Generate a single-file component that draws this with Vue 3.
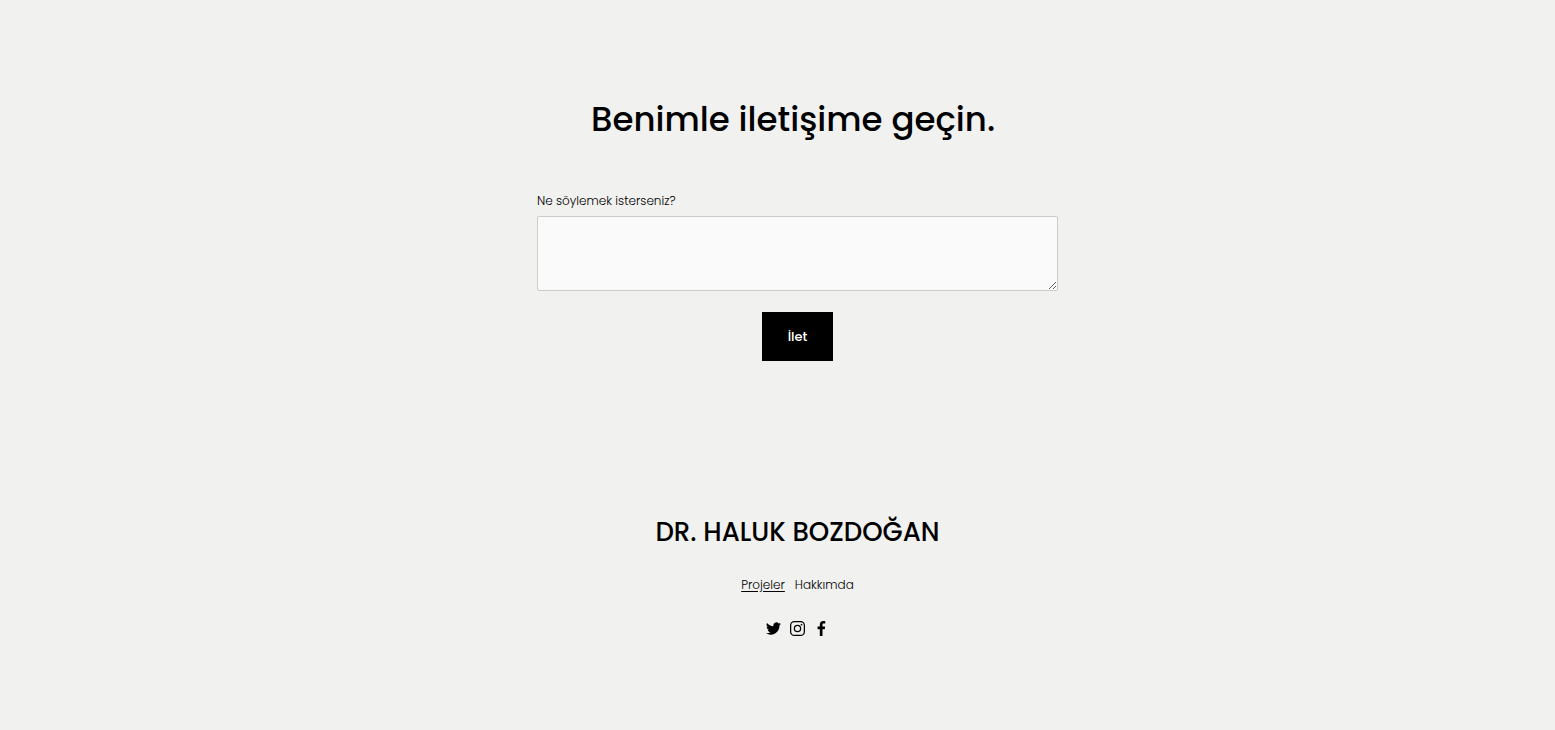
<script setup>
import { ref } from 'vue'

const message = ref('')
</script>

<template>
  <div class="page">
    <main class="contact">
      <h1>Benimle iletişime geçin.&nbsp;</h1>
      <form class="form" @submit.prevent>
        <label for="message">Ne söylemek isterseniz?</label>
        <textarea id="message" v-model="message"></textarea>
        <button type="submit">İlet</button>
      </form>
    </main>
    <footer class="footer">
      <h2>DR. HALUK BOZDOĞAN</h2>
      <nav class="links">
        <a href="#projeler" class="active">Projeler</a>
        <a href="#hakkimda">Hakkımda</a>
      </nav>
      <div class="social">
        <a href="#twitter" aria-label="Twitter">
          <svg viewBox="0 0 24 24"><path d="M24 4.600c-.9.4-1.800.7-2.800.8 1-.6 1.800-1.600 2.200-2.700-1 .6-2 1-3.100 1.200a4.920 4.920 0 0 0-8.400 4.500C7.700 8.200 4.100 6.200 1.700 3.200a4.900 4.900 0 0 0 1.500 6.600c-.8 0-1.600-.2-2.200-.6v.1c0 2.400 1.700 4.400 3.900 4.800-.7.2-1.500.2-2.200.1.600 2 2.400 3.400 4.600 3.400A9.900 9.900 0 0 1 0 19.500 14 14 0 0 0 21.500 7.100c1-.7 1.800-1.600 2.500-2.500z" /></svg>
        </a>
        <a href="#instagram" aria-label="Instagram">
          <svg viewBox="0 0 24 24"><rect x="1" y="1" width="22" height="22" rx="6" fill="none" stroke="#000" stroke-width="2" /><circle cx="12" cy="12" r="5" fill="none" stroke="#000" stroke-width="2" /><circle cx="18.400" cy="5.600" r="1.400" /></svg>
        </a>
        <a href="#facebook" aria-label="Facebook">
          <svg viewBox="0 0 24 24"><path d="M9.300 24V13H5.700V8.800h3.600V5.600C9.300 2 11.500 0 14.700 0c1.600 0 2.900.1 3.300.2V4h-2.300c-1.800 0-2.100.8-2.100 2.100v2.700h4.200l-.6 4.200h-3.600v11z" /></svg>
        </a>
      </div>
    </footer>
  </div>
</template>

<style>
body {
  background: #f1f1ef;
}
</style>

<style scoped>
.page {
  box-sizing: border-box;
  min-height: 100vh;
  padding: 96px 24px 90px;
  margin-left: 40px;
  display: flex;
  flex-direction: column;
  align-items: center;
  font-family: Poppins, Inter, "Liberation Sans", sans-serif;
  color: #000;
}
.contact {
  width: 100%;
  max-width: 521px;
}
h1,
h2 {
  margin: 0;
  font-weight: 500;
  text-align: center;
}
h1 {
  font-size: 34px;
  line-height: 46px;
}
.form {
  margin-top: 50px;
  display: flex;
  flex-direction: column;
}
label {
  font-size: 12px;
  line-height: 18px;
  font-weight: 300;
}
textarea {
  box-sizing: border-box;
  width: 100%;
  height: 75px;
  margin: 6px 0 21px;
  padding: 12px;
  border: 1px solid #ccc;
  border-radius: 2px;
  background: #fafafa;
  font: inherit;
  font-size: 12px;
  resize: vertical;
}
button {
  align-self: center;
  padding: 15px 26px;
  border: 0;
  background: #000;
  color: #fff;
  font: inherit;
  font-size: 13px;
  line-height: 19px;
  font-weight: 500;
}
.footer {
  margin-top: 153px;
  display: flex;
  flex-direction: column;
  align-items: center;
}
h2 {
  font-size: 26px;
  line-height: 36px;
}
.links {
  margin-top: 25px;
  display: flex;
  gap: 10px;
  font-size: 12px;
  line-height: 20px;
  font-weight: 300;
}
a {
  color: inherit;
  text-decoration: none;
}
.active {
  text-decoration: underline;
  text-underline-offset: 2px;
}
.social {
  margin-top: 26px;
  display: flex;
  gap: 9px;
}
.social svg {
  display: block;
  width: 15px;
  height: 15px;
}
</style>
